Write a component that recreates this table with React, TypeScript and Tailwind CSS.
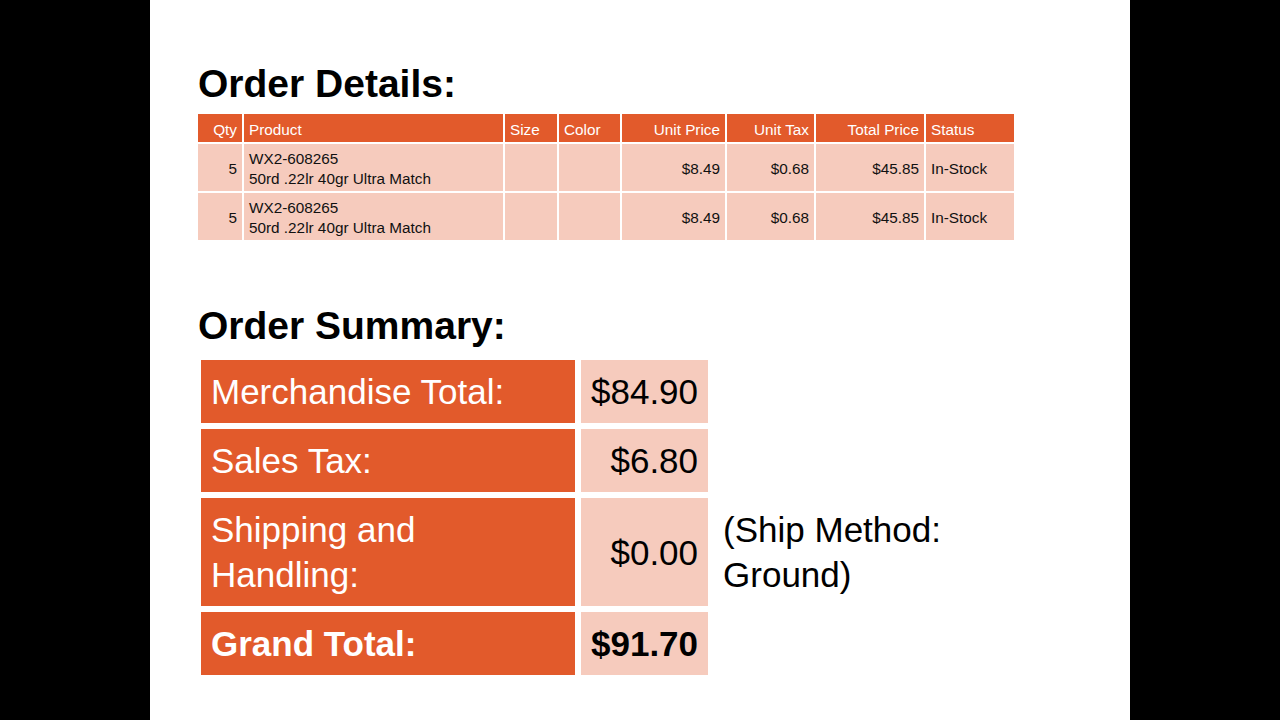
const items = [
  { qty: 5, sku: "WX2-608265", name: "50rd .22lr 40gr Ultra Match", size: "", color: "", unit: "$8.49", tax: "$0.68", total: "$45.85", status: "In-Stock" },
  { qty: 5, sku: "WX2-608265", name: "50rd .22lr 40gr Ultra Match", size: "", color: "", unit: "$8.49", tax: "$0.68", total: "$45.85", status: "In-Stock" },
];

function OrderDetails() {
  return (
    <table className="-ml-[2px] table-fixed border-separate border-spacing-[2px] text-[15.3px] leading-[20px]">
      <colgroup>
        <col className="w-[44px]" />
        <col className="w-[259px]" />
        <col className="w-[52px]" />
        <col className="w-[61px]" />
        <col className="w-[103px]" />
        <col className="w-[87px]" />
        <col className="w-[108px]" />
        <col className="w-[88px]" />
      </colgroup>
      <thead>
        <tr className="h-[28px] bg-[#e25a2b] text-white">
          <th className="px-[5px] pt-[3px] text-right font-normal">Qty</th>
          <th className="px-[5px] pt-[3px] text-left font-normal">Product</th>
          <th className="px-[5px] pt-[3px] text-left font-normal">Size</th>
          <th className="px-[5px] pt-[3px] text-left font-normal">Color</th>
          <th className="px-[5px] pt-[3px] text-right font-normal">Unit Price</th>
          <th className="px-[5px] pt-[3px] text-right font-normal">Unit Tax</th>
          <th className="px-[5px] pt-[3px] text-right font-normal">Total Price</th>
          <th className="px-[5px] pt-[3px] text-left font-normal">Status</th>
        </tr>
      </thead>
      <tbody>
        {items.map((it, i) => (
          <tr key={i} className="h-[47px] bg-[#f6cbbd] text-[#111]">
            <td className="px-[5px] pt-[2px] text-right">{it.qty}</td>
            <td className="px-[5px] pt-[2px]">
              <div>{it.sku}</div>
              <div>{it.name}</div>
            </td>
            <td className="px-[5px]">{it.size}</td>
            <td className="px-[5px]">{it.color}</td>
            <td className="px-[5px] pt-[2px] text-right">{it.unit}</td>
            <td className="px-[5px] pt-[2px] text-right">{it.tax}</td>
            <td className="px-[5px] pt-[2px] text-right">{it.total}</td>
            <td className="px-[5px] pt-[2px]">{it.status}</td>
          </tr>
        ))}
      </tbody>
    </table>
  );
}

function OrderSummary() {
  return (
    <table className="-ml-[3px] mt-[4px] table-fixed border-separate border-spacing-[6px] text-[35px] leading-[45px]">
      <colgroup>
        <col className="w-[374px]" />
        <col className="w-[127px]" />
        <col className="w-[240px]" />
      </colgroup>
      <tbody>
        <tr className="h-[63px]">
          <td className="bg-[#e25a2b] px-[10px] text-white">Merchandise Total:</td>
          <td className="bg-[#f6cbbd] px-[10px] text-right text-black">$84.90</td>
          <td></td>
        </tr>
        <tr className="h-[63px]">
          <td className="bg-[#e25a2b] px-[10px] text-white">Sales Tax:</td>
          <td className="bg-[#f6cbbd] px-[10px] text-right text-black">$6.80</td>
          <td></td>
        </tr>
        <tr className="h-[108px]">
          <td className="bg-[#e25a2b] px-[10px] text-white">
            Shipping and Handling:
          </td>
          <td className="bg-[#f6cbbd] px-[10px] text-right text-black">$0.00</td>
          <td className="pl-[9px] text-black">(Ship Method: Ground)</td>
        </tr>
        <tr className="h-[63px] font-bold">
          <td className="bg-[#e25a2b] px-[10px] text-white">Grand Total:</td>
          <td className="bg-[#f6cbbd] px-[10px] text-right text-black">$91.70</td>
          <td></td>
        </tr>
      </tbody>
    </table>
  );
}

export default function App() {
  return (
    <div
      className="flex h-screen w-full justify-center bg-black"
      style={{ fontFamily: '"Liberation Sans", Arial, sans-serif' }}
    >
      <main className="h-full w-[980px] bg-white pl-[48px] pt-[60px]">
        <h1 className="mb-[4px] text-[39px] font-bold leading-[48px] text-black">Order Details:</h1>
        <OrderDetails />
        <h1 className="mt-[60px] text-[39px] font-bold leading-[48px] text-black">Order Summary:</h1>
        <OrderSummary />
      </main>
    </div>
  );
}
